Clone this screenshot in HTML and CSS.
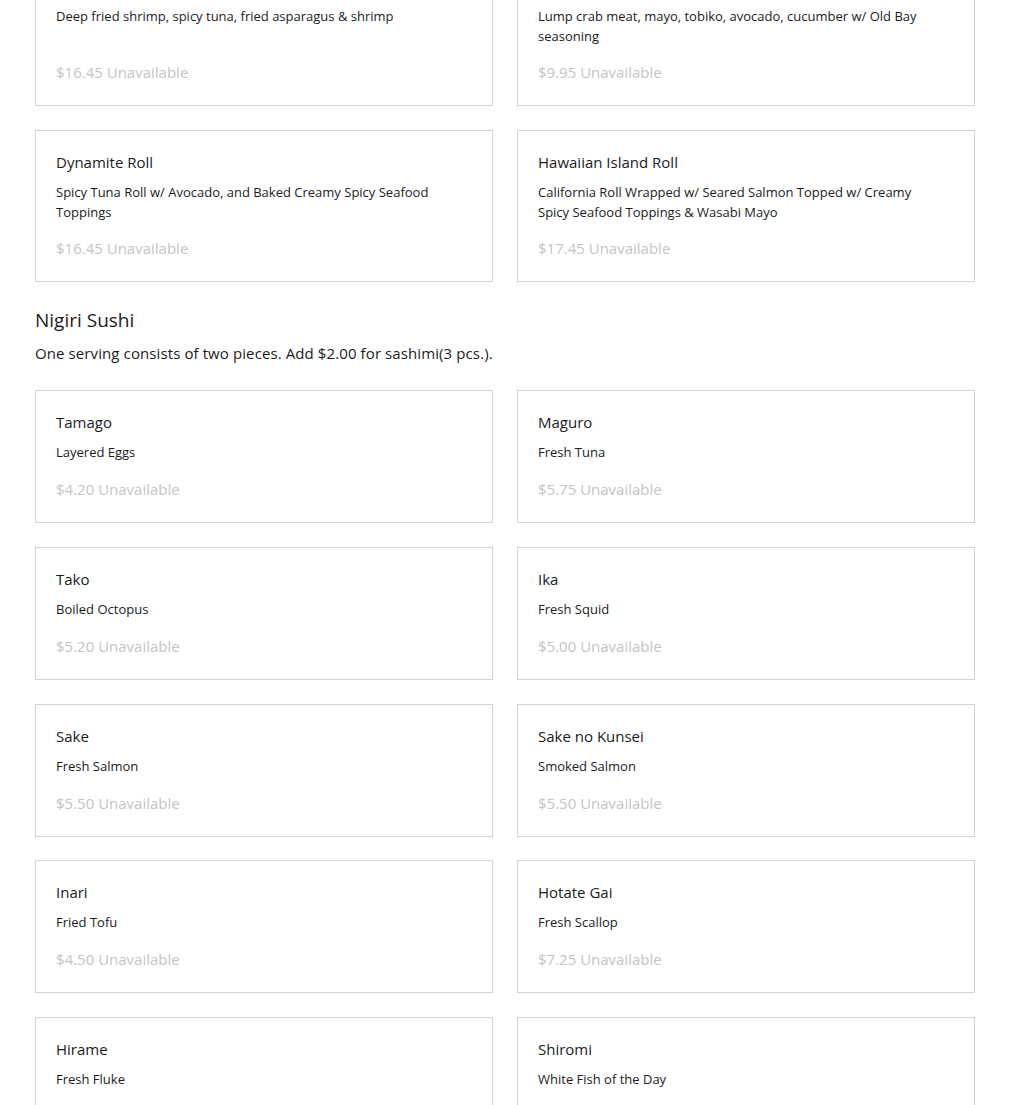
FILE: index.html
```html
<!DOCTYPE html>
<html>
<head>
<meta charset="utf-8">
<link rel="stylesheet" href="styles.css">
</head>
<body>
<div class="menu">
  <div class="grid">
    <div class="card">
      <div class="title">Shrimp Tempura Roll</div>
      <div class="desc">Deep fried shrimp, spicy tuna, fried asparagus &amp; shrimp</div>
      <div class="price">$16.45 Unavailable</div>
    </div>
    <div class="card">
      <div class="title">Baltimore Roll</div>
      <div class="desc">Lump crab meat, mayo, tobiko, avocado, cucumber w/ Old Bay seasoning</div>
      <div class="price">$9.95 Unavailable</div>
    </div>
    <div class="card">
      <div class="title">Dynamite Roll</div>
      <div class="desc">Spicy Tuna Roll w/ Avocado, and Baked Creamy Spicy Seafood Toppings</div>
      <div class="price">$16.45 Unavailable</div>
    </div>
    <div class="card">
      <div class="title">Hawaiian Island Roll</div>
      <div class="desc">California Roll Wrapped w/ Seared Salmon Topped w/ Creamy Spicy Seafood Toppings &amp; Wasabi Mayo</div>
      <div class="price">$17.45 Unavailable</div>
    </div>
  </div>

  <h2 class="section-title">Nigiri Sushi</h2>
  <p class="section-desc">One serving consists of two pieces. Add $2.00 for sashimi(3 pcs.).</p>

  <div class="grid nigiri">
    <div class="card">
      <div class="title">Tamago</div>
      <div class="desc">Layered Eggs</div>
      <div class="price">$4.20 Unavailable</div>
    </div>
    <div class="card">
      <div class="title">Maguro</div>
      <div class="desc">Fresh Tuna</div>
      <div class="price">$5.75 Unavailable</div>
    </div>
    <div class="card">
      <div class="title">Tako</div>
      <div class="desc">Boiled Octopus</div>
      <div class="price">$5.20 Unavailable</div>
    </div>
    <div class="card">
      <div class="title">Ika</div>
      <div class="desc">Fresh Squid</div>
      <div class="price">$5.00 Unavailable</div>
    </div>
    <div class="card">
      <div class="title">Sake</div>
      <div class="desc">Fresh Salmon</div>
      <div class="price">$5.50 Unavailable</div>
    </div>
    <div class="card">
      <div class="title">Sake no Kunsei</div>
      <div class="desc">Smoked Salmon</div>
      <div class="price">$5.50 Unavailable</div>
    </div>
    <div class="card">
      <div class="title">Inari</div>
      <div class="desc">Fried Tofu</div>
      <div class="price">$4.50 Unavailable</div>
    </div>
    <div class="card">
      <div class="title">Hotate Gai</div>
      <div class="desc">Fresh Scallop</div>
      <div class="price">$7.25 Unavailable</div>
    </div>
    <div class="card">
      <div class="title">Hirame</div>
      <div class="desc">Fresh Fluke</div>
      <div class="price">$6.25 Unavailable</div>
    </div>
    <div class="card">
      <div class="title">Shiromi</div>
      <div class="desc">White Fish of the Day</div>
      <div class="price">$6.25 Unavailable</div>
    </div>
  </div>
</div>
</body>
</html>
```

FILE: styles.css
```css
html, body {
  margin: 0;
  padding: 0;
  background: #ffffff;
}
body {
  font-family: "Open Sans", "Liberation Sans", Arial, sans-serif;
  color: #1b1b1b;
  overflow: hidden;
}
.menu {
  width: 940px;
  margin: -46px 0 0 35px;
}
.grid {
  display: grid;
  grid-template-columns: 458px 458px;
  column-gap: 24px;
  row-gap: 24px;
}
.grid.nigiri {
  row-gap: 23.75px;
}
.card {
  border: 1px solid #d3d3d3;
  padding: 19px 20px 23px 20px;
  display: flex;
  flex-direction: column;
  box-sizing: border-box;
}
.grid.nigiri .card {
  min-height: 133px;
}
.title {
  font-size: 15px;
  line-height: 24px;
  color: #1b1b1b;
}
.desc {
  margin-top: 8px;
  font-size: 13px;
  line-height: 20px;
  color: #1b1b1b;
  padding-right: 10px;
}
.price {
  margin-top: auto;
  padding-top: 16px;
  font-size: 15px;
  line-height: 20px;
  color: #c4c4c4;
}
.section-title {
  margin: 24px 0 0 0;
  font-size: 19px;
  line-height: 28px;
  font-weight: normal;
  color: #1b1b1b;
}
.section-desc {
  margin: 8px 0 26px 0;
  font-size: 15px;
  line-height: 22px;
  letter-spacing: 0.1px;
  color: #1b1b1b;
}
```
